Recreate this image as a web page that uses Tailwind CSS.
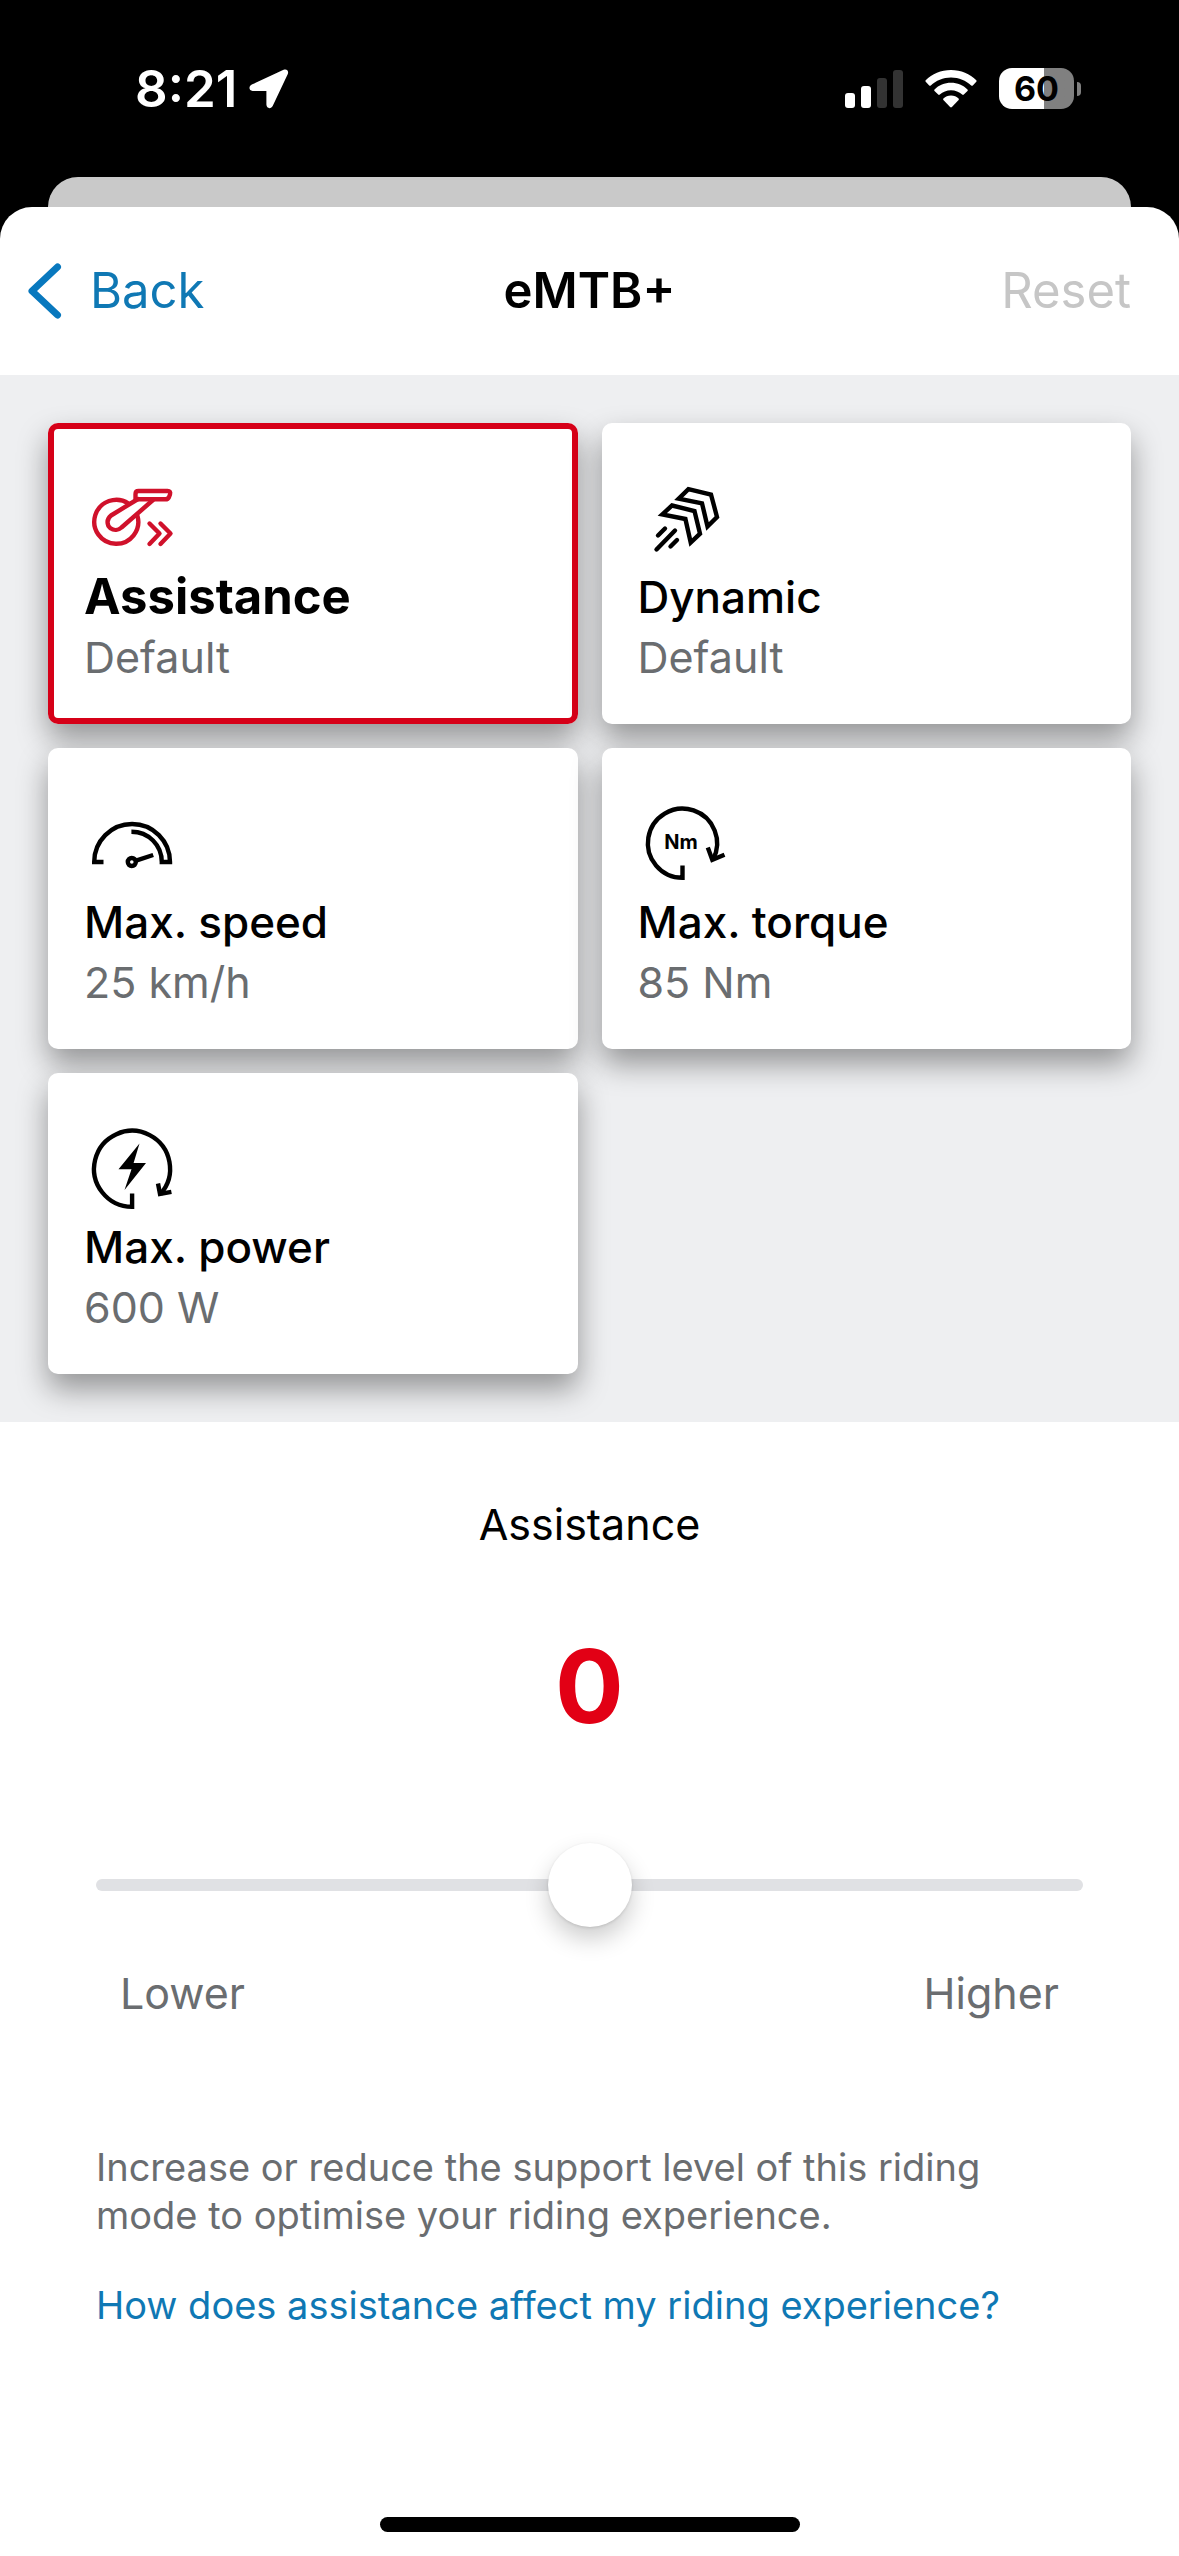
<!DOCTYPE html>
<html lang="en">
<head>
    <meta charset="UTF-8">
    <meta name="viewport" content="width=device-width, initial-scale=1.0">
    <title>eMTB+</title>
    <script src="https://cdn.jsdelivr.net/npm/@tailwindcss/browser@4"></script>
</head>
<body class="flex min-h-screen flex-col bg-black font-['Inter',sans-serif] text-black">
    <!-- Status bar -->
    <div class="flex h-[177px] items-center justify-between pr-[98px] pl-[135px] text-white">
        <div class="flex items-center gap-3">
            <span class="text-[51px] leading-[60px] font-semibold">8:21</span>
            <svg class="h-10 w-10" viewBox="0 0 40 40" fill="currentColor" aria-hidden="true">
                <path d="M34.6 .8 2.8 15.6C-.6 17.4-.2 21.8 3.6 21.9H17.4V35.6C17.5 39.8 22.2 40.4 23.8 36.8L38.8 5C40 1.8 37.6-.6 34.6 .8Z"/>
            </svg>
        </div>
        <div class="flex items-center gap-[22px]">
            <svg class="h-[38px] w-[58px]" viewBox="0 0 58 38" aria-label="Signal">
                <g fill="#fff">
                    <rect x="0" y="23" width="10" height="15" rx="3"/>
                    <rect x="16" y="16" width="10" height="22" rx="3"/>
                </g>
                <g fill="#333">
                    <rect x="32" y="8" width="10" height="30" rx="3"/>
                    <rect x="48" y="0" width="10" height="38" rx="3"/>
                </g>
            </svg>
            <svg class="h-[38px] w-[52px]" viewBox="0 0 52 38" fill="#fff" aria-label="Wi-Fi">
                <path d="M26 0C36 0 45 3.9 51.3 10.2Q52 11 51.3 11.8L47.8 15.4Q47 16.1 46.2 15.4C41 10.4 34 7.4 26 7.4S11 10.4 5.8 15.4Q5 16.1 4.2 15.4L.7 11.8Q0 11 .7 10.2C7 3.9 16 0 26 0Z"/>
                <path d="M26 12.8C32.4 12.8 38.2 15.3 42.5 19.4Q43.2 20.2 42.5 21L38.8 24.6Q38 25.3 37.2 24.6C34.2 21.9 30.3 20.2 26 20.2S17.8 21.9 14.8 24.6Q14 25.3 13.2 24.6L9.5 21Q8.8 20.2 9.5 19.4C13.8 15.3 19.6 12.8 26 12.8Z"/>
                <path d="M26 25.5C29 25.5 31.6 26.6 33.6 28.5Q34.3 29.3 33.6 30.1L26.9 37Q26 37.9 25.1 37L18.4 30.1Q17.7 29.3 18.4 28.5C20.4 26.6 23 25.5 26 25.5Z"/>
            </svg>
            <div class="flex items-center gap-[3px]">
                <div class="flex h-[41px] w-[75px] items-center justify-center rounded-[13px] bg-linear-to-r from-white from-60% to-[#808080] to-60% text-[34px] leading-10 font-bold text-black">60</div>
                <div class="h-[14px] w-1 rounded-r-full bg-[#808080]"></div>
            </div>
        </div>
    </div>

    <!-- Sheet behind -->
    <div class="mx-12 h-[30px] rounded-t-[30px] bg-[#c9c9c9]"></div>

    <main class="flex flex-1 flex-col rounded-t-[32px] bg-white">
        <header class="grid h-[168px] grid-cols-3 items-center text-[49px] leading-[60px]">
            <button class="ml-7 flex items-center gap-7 text-[#0f78b4]">
                <svg class="h-14 w-[34px]" viewBox="0 0 34 56" fill="none" stroke="#0878be" stroke-width="7" stroke-linecap="round" stroke-linejoin="round" aria-hidden="true">
                    <path d="M29.5 4 4 28 29.5 52"/>
                </svg>
                Back
            </button>
            <h1 class="text-center font-semibold">eMTB+</h1>
            <button class="mr-12 justify-self-end text-[#c6c6c6]" disabled>Reset</button>
        </header>

        <!-- Mode settings -->
        <section class="grid grid-cols-2 gap-6 bg-[#eeeff1] p-12 text-[44px] leading-[60px]">
            <button class="flex h-[301px] flex-col rounded-[10px] bg-white px-9 pt-12 text-left shadow-[0_15px_30px_rgb(0_0_0/.38)] ring-6 ring-[#d60018] ring-inset" aria-pressed="true">
                <svg class="size-24" viewBox="0 0 96 96" fill="none" stroke="#d0112b" stroke-width="4.4" stroke-linecap="round" stroke-linejoin="round" aria-hidden="true">
                    <path d="M44.5 32.5A22 22 0 1 0 53.5 45"/>
                    <path d="M54 28 27 44.5C22.5 48 22.5 54 26.5 57.2C30 59.8 34.5 59.3 37.5 56.5L69 29"/>
                    <path d="M54.5 20H83.5Q87 20 86 23.5L85 26Q84 28.3 81.5 28.3H51.5V23Q51.5 20 54.5 20Z"/>
                    <path d="M65.5 52.5 75.5 62.5 65.5 73M76.5 52.5 86.5 62.5 76.5 73"/>
                </svg>
                <span class="text-[49px] font-bold">Assistance</span>
                <span class="text-[43px] text-[#6a6d70]">Default</span>
            </button>
            <button class="flex h-[301px] flex-col rounded-[10px] bg-white px-9 pt-12 text-left shadow-[0_15px_30px_rgb(0_0_0/.38)]" aria-pressed="false">
                <svg class="size-24" viewBox="0 0 96 96" fill="none" stroke="#000" stroke-width="4.4" aria-hidden="true">
                    <path d="M50.4 18.2 73 23.5 79 46 69.5 55.5 64 32.3 40.7 27.7Z"/>
                    <path d="M34 34.5 56.5 40 62 62.7 52.7 71.5 47.4 48 24.3 43.5Z"/>
                    <path stroke-linecap="round" d="M27 57.5 20 64.5M37 59.5 18.5 78.5M39 69 32.5 75.5"/>
                </svg>
                <span class="font-medium">Dynamic</span>
                <span class="text-[43px] text-[#6a6d70]">Default</span>
            </button>
            <button class="flex h-[301px] flex-col rounded-[10px] bg-white px-9 pt-12 text-left shadow-[0_15px_30px_rgb(0_0_0/.38)]" aria-pressed="false">
                <svg class="size-24" viewBox="0 0 96 96" fill="none" stroke="#000" stroke-width="4.4" aria-hidden="true">
                    <path d="M19.5 66H10.2A37.9 38 0 0 1 86 66H77.8C77.8 49 64.5 35.7 47.4 35.7"/>
                    <circle cx="47.8" cy="66" r="4"/>
                    <path d="M52 64.7 69.2 59"/>
                </svg>
                <span class="font-medium">Max. speed</span>
                <span class="text-[43px] text-[#6a6d70]">25 km/h</span>
            </button>
            <button class="flex h-[301px] flex-col rounded-[10px] bg-white px-9 pt-12 text-left shadow-[0_15px_30px_rgb(0_0_0/.38)]" aria-pressed="false">
                <svg class="size-24" viewBox="0 0 96 96" fill="none" stroke="#000" stroke-width="4.4" aria-hidden="true">
                    <path d="M44.5 69.5V81.8A34.6 34.6 0 1 1 75 63.5"/>
                    <path d="M69.8 51.5 74.3 63.8 86.5 58.8"/>
                    <text x="43" y="53" text-anchor="middle" font-size="20" font-weight="700" fill="#000" stroke="none">Nm</text>
                </svg>
                <span class="font-medium">Max. torque</span>
                <span class="text-[43px] text-[#6a6d70]">85 Nm</span>
            </button>
            <button class="flex h-[301px] flex-col rounded-[10px] bg-white px-9 pt-12 text-left shadow-[0_15px_30px_rgb(0_0_0/.38)]" aria-pressed="false">
                <svg class="size-24" viewBox="0 0 96 96" fill="none" stroke="#000" stroke-width="4.4" aria-hidden="true">
                    <path d="M48.1 72.5V85.8A38 38 0 1 1 76.5 73"/>
                    <path d="M74 62.5 76 73 87.4 70.8"/>
                    <path fill="#000" stroke="none" d="M55.5 22.5 34.5 48.3H47.5L40.5 69 62 42H49.6Z"/>
                </svg>
                <span class="font-medium">Max. power</span>
                <span class="text-[43px] text-[#6a6d70]">600 W</span>
            </button>
        </section>

        <!-- Selected setting -->
        <section class="px-24 pt-[72px] text-[43px] leading-[60px] text-[#6a6d70]">
            <label for="assistance" class="block text-center text-black">Assistance</label>
            <output for="assistance" class="mt-[72px] block text-center text-[102px] leading-[120px] font-bold text-[#e20015]">0</output>
            <input id="assistance" type="range" min="-5" max="5" value="0" class="mt-[97px] block h-[84px] w-full appearance-none bg-transparent [&::-webkit-slider-runnable-track]:h-3 [&::-webkit-slider-runnable-track]:rounded-full [&::-webkit-slider-runnable-track]:bg-[#e0e1e4] [&::-webkit-slider-thumb]:-mt-9 [&::-webkit-slider-thumb]:size-[84px] [&::-webkit-slider-thumb]:appearance-none [&::-webkit-slider-thumb]:rounded-full [&::-webkit-slider-thumb]:bg-white [&::-webkit-slider-thumb]:shadow-[0_1px_3px_rgb(0_0_0/.12),0_12px_24px_rgb(0_0_0/.2)]">
            <div class="mt-9 flex justify-between px-6">
                <span>Lower</span>
                <span>Higher</span>
            </div>
            <p class="mt-[120px] text-[38px] leading-12">Increase or reduce the support level of this riding mode to optimise your riding experience.</p>
            <a href="#" class="mt-[42px] block text-[38px] leading-12 text-[#0f78b4]">How does assistance affect my riding experience?</a>
        </section>

        <!-- Home indicator -->
        <div class="mt-auto flex justify-center pb-6">
            <div class="h-[15px] w-[420px] rounded-full bg-black"></div>
        </div>
    </main>
</body>
</html>
